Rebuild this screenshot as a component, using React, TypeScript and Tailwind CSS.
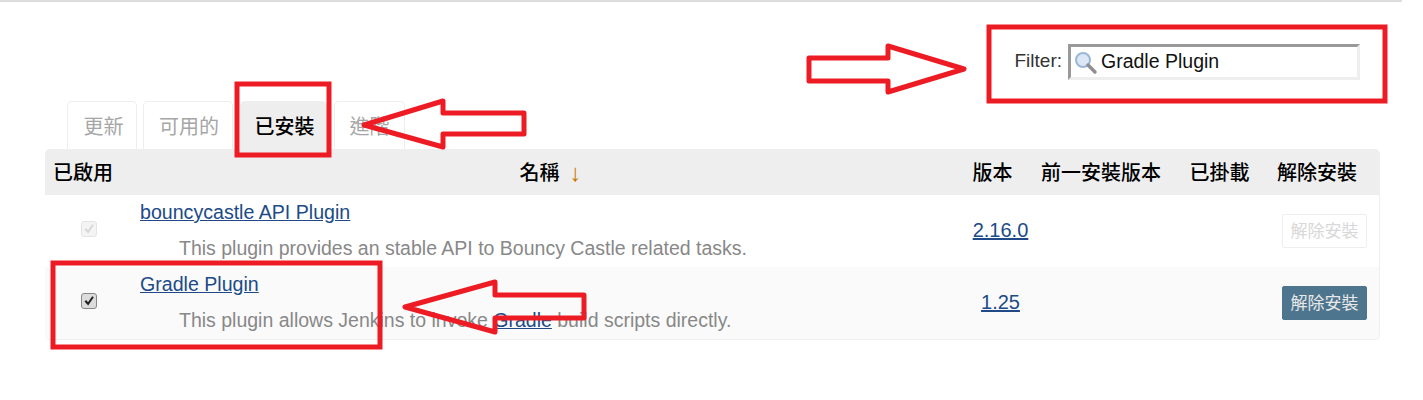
import React from "react";

const cjk = '"Liberation Sans", "Noto Sans CJK TC", sans-serif';

function Tab({ label, active, w }: { label: string; active?: boolean; w: string }) {
  return (
    <div
      className={`${w} h-[48px] flex items-center justify-center rounded-t-[5px] border border-b-0 pt-[3px] text-[20px] ${
        active ? "border-[#eeeeee] bg-[#eeeeee] text-black font-medium" : "border-[#eeeeee] bg-white text-[#a6a6a6]"
      }`}
    >
      {label}
    </div>
  );
}

function Check({ disabled }: { disabled?: boolean }) {
  return (
    <div
      className={`w-4 h-4 rounded-[3px] border flex items-center justify-center ${
        disabled ? "border-[#e4e4e4] bg-[#f4f4f4]" : "border-[#888888] bg-[#dcdcdc]"
      }`}
    >
      <svg width="12" height="12" viewBox="0 0 12 12">
        <path
          d="M1.5 6.5 L3.2 5 L5 7.2 L9.2 1.2 L10.8 2.2 L5.2 10.6 Z"
          fill={disabled ? "#d8d8d8" : "#222222"}
        />
      </svg>
    </div>
  );
}

function Row({
  name,
  desc,
  version,
  disabled,
  shaded,
}: {
  name: string;
  desc: React.ReactNode;
  version: string;
  disabled?: boolean;
  shaded?: boolean;
}) {
  return (
    <div className={`flex h-[72px] ${shaded ? "bg-[#fafafa]" : "bg-white"}`}>
      <div className="w-[95px] flex items-center justify-center pr-[7px] pb-[4px]">
        <Check disabled={disabled} />
      </div>
      <div className="w-[827px] flex flex-col pt-[4px]">
        <a className="text-[19.6px] leading-[26px] text-[#204a87] underline w-fit">{name}</a>
        <div className="mt-[10px] ml-[39px] text-[19.5px] leading-[26px] text-[#888888]">{desc}</div>
      </div>
      <div className="w-[65px] flex items-center justify-center pl-[2px] pb-[2px]">
        <a className="text-[20px] text-[#204a87] underline">{version}</a>
      </div>
      <div className="flex-1 flex items-center justify-end pr-[12px]">
        <div
          className={`w-[85px] h-[34px] flex items-center justify-center rounded-[2px] border pt-[1px] text-[17px] ${
            disabled
              ? "border-[#eeeeee] bg-white text-[#d8d8d8]"
              : "border-[#4d758e] bg-[#4d758e] text-[#e8e8e8]"
          }`}
        >
          解除安裝
        </div>
      </div>
    </div>
  );
}

export default function App() {
  return (
    <div className="relative w-[1423px] h-[400px] overflow-hidden bg-white" style={{ fontFamily: cjk }}>
      <div className="w-[1402px] h-[2px] bg-[#dddddd]" />

      {/* Filter */}
      <div className="flex items-center justify-end pr-[63px] pt-[42px] text-[19px] text-[#333333]">
        <span className="mr-[6px] -mt-[2px]">Filter:</span>
        <div className="w-[292px] h-[36px] flex items-center border-[3px] border-t-[#999999] border-l-[#999999] border-r-[#eeeeee] border-b-[#eeeeee] bg-white pl-[1px]">
          <svg width="26" height="26" viewBox="0 0 26 26" className="shrink-0">
            <circle cx="11" cy="11" r="7" fill="#dbe7f7" stroke="#9db6d6" strokeWidth="2" />
            <path d="M16 16 L23 23" stroke="#8f8f8f" strokeWidth="3.5" strokeLinecap="round" />
          </svg>
          <span className="text-[19.5px] text-[#111111] ml-[3px] -mt-[1px]">Gradle Plugin</span>
        </div>
      </div>

      {/* Tabs */}
      <div className="flex pl-[67px] mt-[21px]">
        <Tab label="更新" w="w-[70px] pl-[3px]" />
        <Tab label="可用的" w="w-[90px] ml-[6px] pl-[2px]" />
        <Tab label="已安裝" active w="w-[87px] ml-[7px] pl-[2px]" />
        <Tab label="進階" w="w-[71px] ml-[7px]" />
      </div>

      {/* Plugin table */}
      <div className="mx-[45px] w-[1335px] rounded-[5px] border-b border-r border-[#eeeeee] overflow-hidden">
        <div className="flex h-[46px] items-center bg-[#eeeeee] pt-[1px] text-[20px] font-medium text-black">
          <div className="w-[95px] pl-[8px]">已啟用</div>
          <div className="w-[827px] flex items-center justify-center pl-[14px] pr-[20px]">
            名稱
            <span className="ml-[10px] text-[24px] leading-none text-[#c77700]">↓</span>
          </div>
          <div className="w-[54px] text-center pr-[3px]">版本</div>
          <div className="w-[160px] text-center">前一安裝版本</div>
          <div className="w-[77px] text-center">已掛載</div>
          <div className="flex-1 text-center pr-[3px]">解除安裝</div>
        </div>
        <Row
          name="bouncycastle API Plugin"
          desc="This plugin provides an stable API to Bouncy Castle related tasks."
          version="2.16.0"
          disabled
        />
        <Row
          name="Gradle Plugin"
          desc={
            <>
              This plugin allows Jenkins to invoke <a className="text-[#204a87] underline">Gradle</a> build scripts
              directly.
            </>
          }
          version="1.25"
          shaded
        />
      </div>

      {/* Red annotations */}
      <svg className="absolute inset-0 pointer-events-none" width="1423" height="400" fill="none" stroke="#ed1c24" strokeWidth="5">
        <rect x="989" y="27" width="396" height="74" />
        <rect x="237" y="84" width="92" height="71" />
        <rect x="53" y="263" width="327" height="84" />
        <path strokeLinejoin="round" d="M809 58 H888 V46 L964 69 L888 92 V81 H809 Z" />
        <path strokeLinejoin="round" d="M524 113 H443 V101 L364 125 L443 147 V134 H524 Z" />
        <path strokeLinejoin="round" d="M584 295 H495 V282 L405 307 L495 332 V318 H584 Z" />
      </svg>
    </div>
  );
}
